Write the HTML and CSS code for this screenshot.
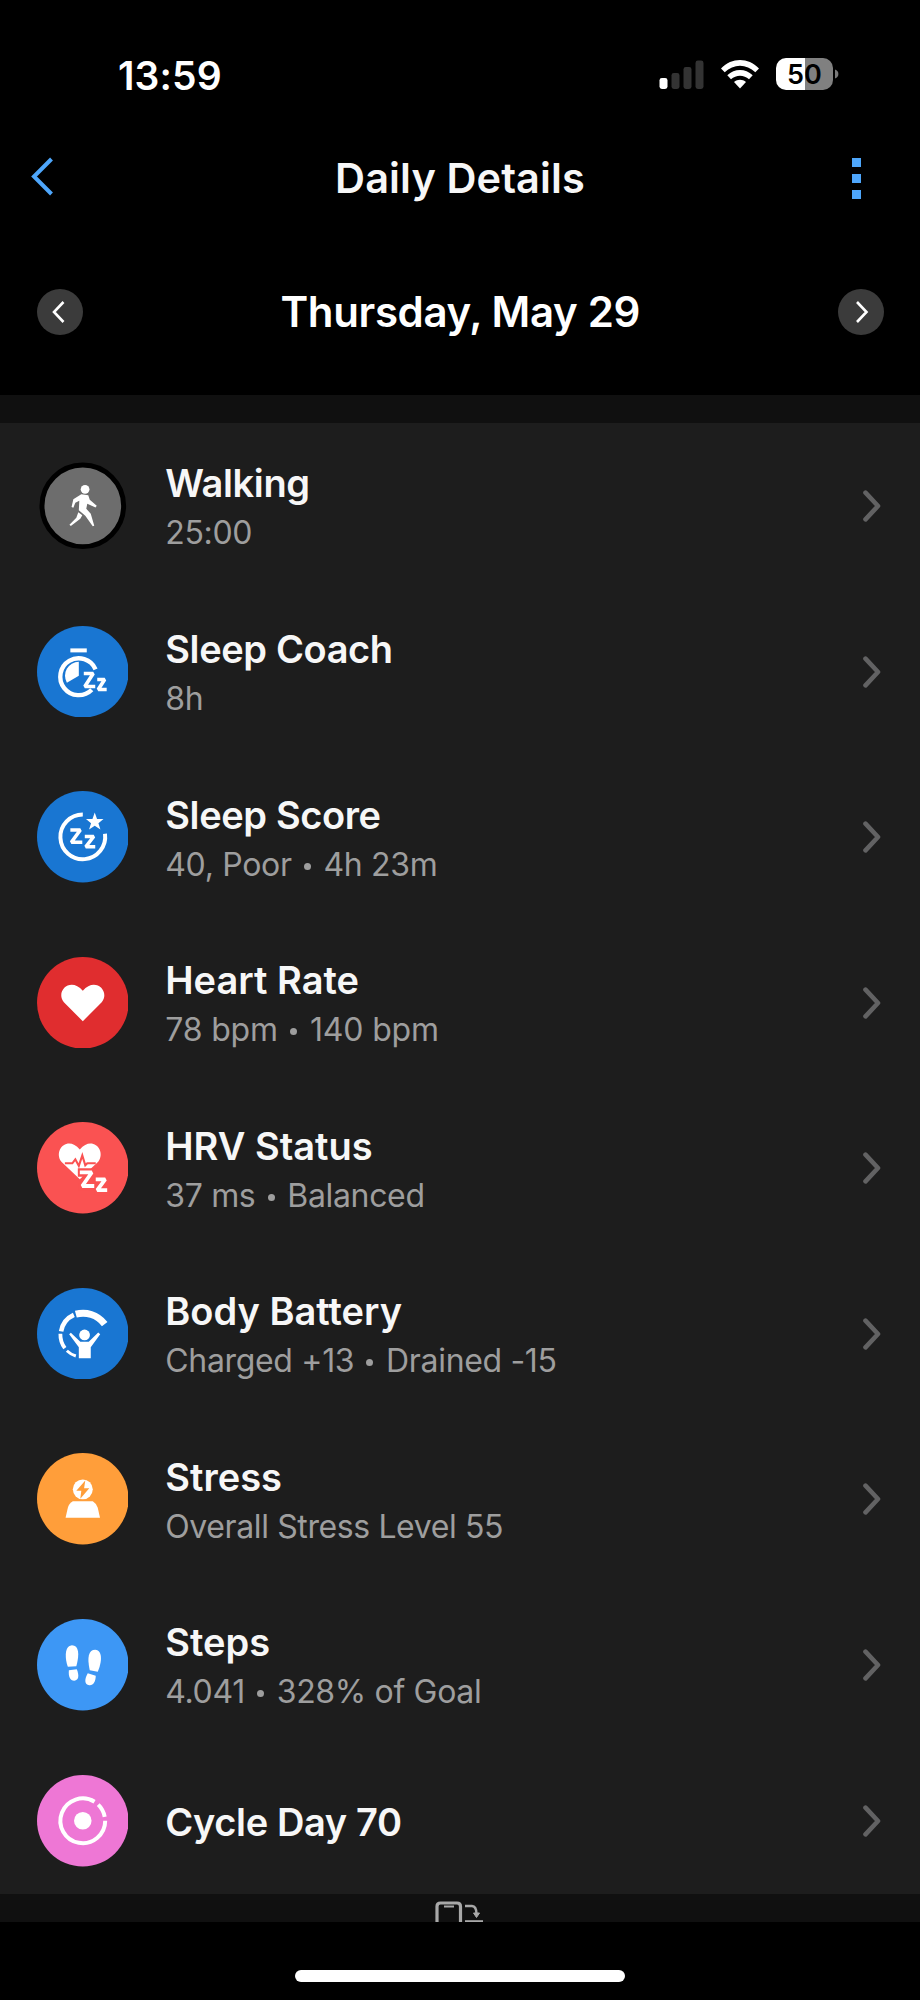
FILE: index.html
```
<!DOCTYPE html>
<html lang="en">
<head>
<meta charset="utf-8">
<title>Daily Details</title>
<link rel="stylesheet" href="styles.css">
</head>
<body>
<div class="screen">
  <div class="status">
    <span class="time">13:59</span>
    <div class="indicators">
      <svg class="signal" width="46" height="30" viewBox="0 0 46 30">
        <rect x="0.5" y="18" width="8" height="11" rx="2.4" fill="#fff"/>
        <rect x="12.5" y="13" width="8" height="16" rx="2.4" fill="#333"/>
        <rect x="24.5" y="7" width="8" height="22" rx="2.4" fill="#333"/>
        <rect x="36.5" y="0.5" width="8" height="28.5" rx="2.4" fill="#333"/>
      </svg>
      <svg class="wifi" width="38" height="29" viewBox="0 0 38 29">
        <path d="M0 8.5C11-2.8 27-2.8 38 8.500L34.300 12.300C25.500 3.500 12.500 3.500 3.700 12.300Z" fill="#fff"/>
        <path d="M6.300 15.300C13.700 8.200 24.300 8.200 31.700 15.300L28 19.200C23 14.500 15 14.500 10 19.200Z" fill="#fff"/>
        <path d="M13 22C16.500 19 21.500 19 25 22L19 28.600Z" fill="#fff"/>
      </svg>
      <div class="battery"><span>50</span></div>
      <svg class="cap" width="4" height="10" viewBox="0 0 4 10"><path d="M0 0.500C4.500 2 4.500 8 0 9.500Z" fill="#7a7a7a"/></svg>
    </div>
  </div>

  <div class="nav">
    <svg class="back" width="24" height="42" viewBox="0 0 24 42"><path d="M21.500 3L4 20.500L21.500 38" fill="none" stroke="#4ea6fb" stroke-width="4"/></svg>
    <h1 class="title">Daily Details</h1>
    <div class="more"><i></i><i></i><i></i></div>
  </div>

  <div class="datebar">
    <div class="round"><svg width="46" height="46" viewBox="0 0 46 46"><path d="M26.500 13L17 23L26.500 33" fill="none" stroke="#fff" stroke-width="2.600"/></svg></div>
    <h2 class="date">Thursday, May 29</h2>
    <div class="round"><svg width="46" height="46" viewBox="0 0 46 46"><path d="M19 13L28.500 23L19 33" fill="none" stroke="#fff" stroke-width="2.600"/></svg></div>
  </div>

  <div class="band"></div>

  <div class="list">
    <div class="row">
      <svg class="icon" viewBox="0 0 92 92">
        <circle cx="46" cy="46" r="41" fill="#6d6d6d" stroke="#000" stroke-width="5"/>
        <g fill="#fff">
          <circle cx="48.300" cy="29.500" r="4.400"/>
          <path d="M44.500 34.500L51.500 35.500L53 40L60 46L58.800 47.700L50.500 44L49.500 49L54 54L57.500 66L56 66.600L48.500 56L42 50.500L42.500 41L38.500 43L36.500 48L34.700 47.300L36.500 39.500Z"/>
          <path d="M41.500 52.500L45.500 55.500L43.500 59L34 66.300L32.600 65L39.500 58Z"/>
        </g>
      </svg>
      <div class="text"><div class="name tight">Walking</div><div class="sub">25:00</div></div>
      <svg class="chev" viewBox="0 0 20 34"><path d="M4.500 3.700L17 17L4.500 30.300"/></svg>
    </div>

    <div class="row">
      <svg class="icon" viewBox="0 0 92 92">
        <circle cx="46" cy="46" r="46" fill="#1976d2"/>
        <rect x="33.500" y="22.500" width="16.500" height="4" fill="#fff"/>
        <path d="M58.800 43.500A18.500 18.500 0 1 0 55 64" fill="none" stroke="#fff" stroke-width="4.400"/>
        <path d="M42 36V50L30 57A14 14 0 0 1 42 36Z" fill="#fff"/>
        <path d="M47 47.700H56.500L48 60.800H58.500M60.500 53.800H68L61.500 63.800H70" fill="none" stroke="#fff" stroke-width="3.600" stroke-linejoin="bevel"/>
      </svg>
      <div class="text"><div class="name tight">Sleep Coach</div><div class="sub">8h</div></div>
      <svg class="chev" viewBox="0 0 20 34"><path d="M4.500 3.700L17 17L4.500 30.300"/></svg>
    </div>

    <div class="row">
      <svg class="icon" viewBox="0 0 92 92">
        <circle cx="46" cy="46" r="46" fill="#1976d2"/>
        <path d="M46 23.500A22.500 22.500 0 1 0 68.300 43" fill="none" stroke="#fff" stroke-width="4"/>
        <path d="M58 21.500L60.300 28H66.800L61.700 32.400L63.700 38.700L58 35L52.300 38.700L54.300 32.400L49.200 28H55.700Z" fill="#fff"/>
        <path d="M33.500 39.200H43.500L34.500 51.500H45.500M48 45.700H57L49 56H58.500" fill="none" stroke="#fff" stroke-width="3.600" stroke-linejoin="bevel"/>
      </svg>
      <div class="text"><div class="name tight">Sleep Score</div><div class="sub">40, Poor <b></b> 4h 23m</div></div>
      <svg class="chev" viewBox="0 0 20 34"><path d="M4.500 3.700L17 17L4.500 30.300"/></svg>
    </div>

    <div class="row">
      <svg class="icon" viewBox="0 0 92 92">
        <circle cx="46" cy="46" r="46" fill="#e02d2f"/>
        <path d="M46 64.500L27 45.500C18 34 34 19.500 46 34C58 19.500 74 34 65 45.500Z" fill="#fff"/>
      </svg>
      <div class="text"><div class="name">Heart Rate</div><div class="sub wide">78 bpm <b></b> 140 bpm</div></div>
      <svg class="chev" viewBox="0 0 20 34"><path d="M4.500 3.700L17 17L4.500 30.300"/></svg>
    </div>

    <div class="row">
      <svg class="icon" viewBox="0 0 92 92">
        <circle cx="46" cy="46" r="46" fill="#fa5252"/>
        <path d="M43 57.500L24.500 40C16 28 31 13 43 27.500C55 13 70 28 61.500 40L55 46Z" fill="#fff"/>
        <path d="M28 41.500H35.500L38.500 37.500L42 44L45.500 33.500L48.500 43.500L50.500 41.500H59" fill="none" stroke="#fa5252" stroke-width="2.100"/>
        <path d="M41 46.500H61L54 54H73V74H58V69H42V62L46 55H41Z" fill="#fa5252"/>
        <path d="M43 50.700H55L45.500 64.300H57.500M59 57.700H68.500L60.500 68.500H70.500" fill="none" stroke="#fff" stroke-width="3.800" stroke-linejoin="bevel"/>
      </svg>
      <div class="text"><div class="name">HRV Status</div><div class="sub">37 ms <b></b> Balanced</div></div>
      <svg class="chev" viewBox="0 0 20 34"><path d="M4.500 3.700L17 17L4.500 30.300"/></svg>
    </div>

    <div class="row">
      <svg class="icon" viewBox="0 0 92 92">
        <circle cx="46" cy="46" r="46" fill="#1976d2"/>
        <g fill="none" stroke="#fff">
          <path d="M39 26.300C49 23.500 60.500 26.500 68 36.200" stroke-width="7"/>
          <path d="M37 27A22.500 22.500 0 0 0 24.200 43.500" stroke-width="4.600"/>
          <path d="M23.500 46A23 23 0 0 0 28 60.500" stroke-width="3.800"/>
          <path d="M30 63A23 23 0 0 0 39 68.300" stroke-width="3"/>
        </g>
        <circle cx="47.800" cy="47.200" r="5.400" fill="#fff"/>
        <path d="M32.300 46.500L34 45L43.500 54H52L61.500 44.800L63.500 46.500L54 59.500V70.500H42V59.500Z" fill="#fff"/>
      </svg>
      <div class="text"><div class="name">Body Battery</div><div class="sub">Charged +13 <b></b> Drained -15</div></div>
      <svg class="chev" viewBox="0 0 20 34"><path d="M4.500 3.700L17 17L4.500 30.300"/></svg>
    </div>

    <div class="row">
      <svg class="icon" viewBox="0 0 92 92">
        <circle cx="46" cy="46" r="46" fill="#ff9e3a"/>
        <circle cx="46" cy="36.500" r="10" fill="#fff"/>
        <path d="M48.500 27.500L39.500 38H44.500L43.500 46L52.500 35.300H47.300Z" fill="#ff9e3a"/>
        <path d="M36 48.500H56Q60 51 61 55L63.300 65H28.700L31 55Q32 51 36 48.500Z" fill="#fff"/>
      </svg>
      <div class="text"><div class="name">Stress</div><div class="sub tight">Overall Stress Level 55</div></div>
      <svg class="chev" viewBox="0 0 20 34"><path d="M4.500 3.700L17 17L4.500 30.300"/></svg>
    </div>

    <div class="row">
      <svg class="icon" viewBox="0 0 92 92">
        <circle cx="46" cy="46" r="46" fill="#3d97f5"/>
        <g fill="#fff">
          <path d="M31 48C28 40 27.500 27 34.500 26.500C42 26 43 35 39.500 47.500Z"/>
          <path d="M32 51.500L40 50.500C42.500 57 42 61.500 37.500 62C33 62 31.500 57.500 32 51.500Z"/>
          <path d="M53 51.500C50 38 52 31 58.500 31C66.500 32 65 44 61 53Z"/>
          <path d="M51 54.500L59 57C59 63 56.500 67 52.500 66.500C47.500 66 47.500 60.500 51 54.500Z"/>
        </g>
      </svg>
      <div class="text"><div class="name">Steps</div><div class="sub">4.041 <b></b> 328% of Goal</div></div>
      <svg class="chev" viewBox="0 0 20 34"><path d="M4.500 3.700L17 17L4.500 30.300"/></svg>
    </div>

    <div class="row last">
      <svg class="icon" viewBox="0 0 92 92">
        <circle cx="46" cy="46" r="46" fill="#ee77d5"/>
        <circle cx="46" cy="46" r="8.800" fill="#fff"/>
        <path d="M68.500 46A22.500 22.500 0 1 1 57.800 26.800" fill="none" stroke="#fff" stroke-width="4"/>
        <path d="M61.500 29.700A22.500 22.500 0 0 1 68 42" fill="none" stroke="#fff" stroke-width="4"/>
      </svg>
      <div class="text"><div class="name tight">Cycle Day 70</div></div>
      <svg class="chev" viewBox="0 0 20 34"><path d="M4.500 3.700L17 17L4.500 30.300"/></svg>
    </div>
  </div>

  <div class="hint">
    <svg width="50" height="21" viewBox="0 0 50 21" fill="none" stroke="#a8a8a8">
      <path d="M2 22V5.500Q2 2 5.500 2H22Q25.500 2 25.500 5.500V22" stroke-width="3.200"/>
      <path d="M9 5.500H19" stroke-width="2"/>
      <path d="M30 5H37Q41.500 5.500 41.500 13" stroke-width="2.400"/>
      <path d="M38.500 12H44.500L41.500 16.500Z" fill="#a8a8a8" stroke-width="1"/>
      <path d="M30 20.500H48" stroke-width="2.600"/>
    </svg>
  </div>
  <div class="home"><div class="pill"></div></div>
</div>
</body>
</html>
```
FILE: styles.css
```
* { box-sizing: border-box; }
body { margin: 0; background: #000; font-family: Inter, "Liberation Sans", sans-serif; }
.screen { width: 920px; height: 2000px; display: flex; flex-direction: column; overflow: hidden; }
.status { height: 130px; padding: 54px 81px 0 118px; display: flex; justify-content: space-between; }
.time { color: #fff; font-size: 39px; font-weight: 600; line-height: 43px; letter-spacing: 0.1px; }
.indicators { display: flex; align-items: flex-start; }
.signal { margin-top: 6px; margin-right: 16px; }
.wifi { margin-top: 6px; margin-right: 17px; }
.battery { width: 57px; height: 32px; margin-top: 4px; border-radius: 10px; background: linear-gradient(90deg, #fff 51%, #808080 51%); color: #000; font-size: 27px; font-weight: 600; line-height: 33px; text-align: center; }
.cap { margin: 15px 0 0 2px; }
.nav { height: 94px; padding: 0 30px; display: grid; grid-template-columns: 40px 1fr 40px; align-items: center; }
.back { display: block; }
.title { margin: 0; padding-top: 1px; color: #f7f7f7; font-size: 41.5px; font-weight: 600; text-align: center; letter-spacing: 0.1px; }
.more { display: flex; flex-direction: column; gap: 7px; padding: 2px 0 0 1.500px; }
.more i { width: 9px; height: 9px; background: #4ea6fb; }
.datebar { height: 170.600px; padding: 64px 36px 0 36.500px; display: flex; justify-content: space-between; align-items: flex-start; }
.round { width: 46px; height: 46px; margin-top: 1px; border-radius: 50%; background: #3b3b3b; }
.round svg { display: block; }
.date { margin: 0; color: #fff; font-size: 42px; font-weight: 600; line-height: 48px; letter-spacing: -0.350px; }
.band { height: 28.600px; background: #101010; }
.list { background: #1d1d1d; }
.row { height: 165.550px; padding: 0 39px 0 36.700px; display: flex; align-items: center; }
.row.last { height: 146.600px; }
.icon { width: 91.600px; height: 91.600px; flex: none; }
.text { flex: 1; margin-left: 37px; padding-top: 2px; }
.name { color: #f7f7f7; font-size: 38px; font-weight: 600; line-height: 48px; white-space: nowrap; }
.name.tight { letter-spacing: -0.380px; }
.sub { color: #9e9e9e; font-size: 32px; line-height: 42px; margin-top: 5px; white-space: nowrap; letter-spacing: -0.330px; }
.sub.wide { letter-spacing: -0.180px; }
.sub.tight { letter-spacing: -0.390px; }
.sub b { display: inline-block; width: 7px; height: 7px; margin: 0 4px 0 3.500px; border-radius: 50%; background: #9e9e9e; vertical-align: 6px; }
.chev { width: 20px; height: 34px; flex: none; fill: none; stroke: #626263; stroke-width: 4.600; stroke-linecap: round; stroke-linejoin: round; }
.hint { height: 28px; padding-top: 7px; background: #101010; display: flex; padding-left: 435px; }
.home { flex: 1; padding-top: 48px; display: flex; justify-content: center; }
.pill { width: 330px; height: 12px; border-radius: 6px; background: #fff; }
```
